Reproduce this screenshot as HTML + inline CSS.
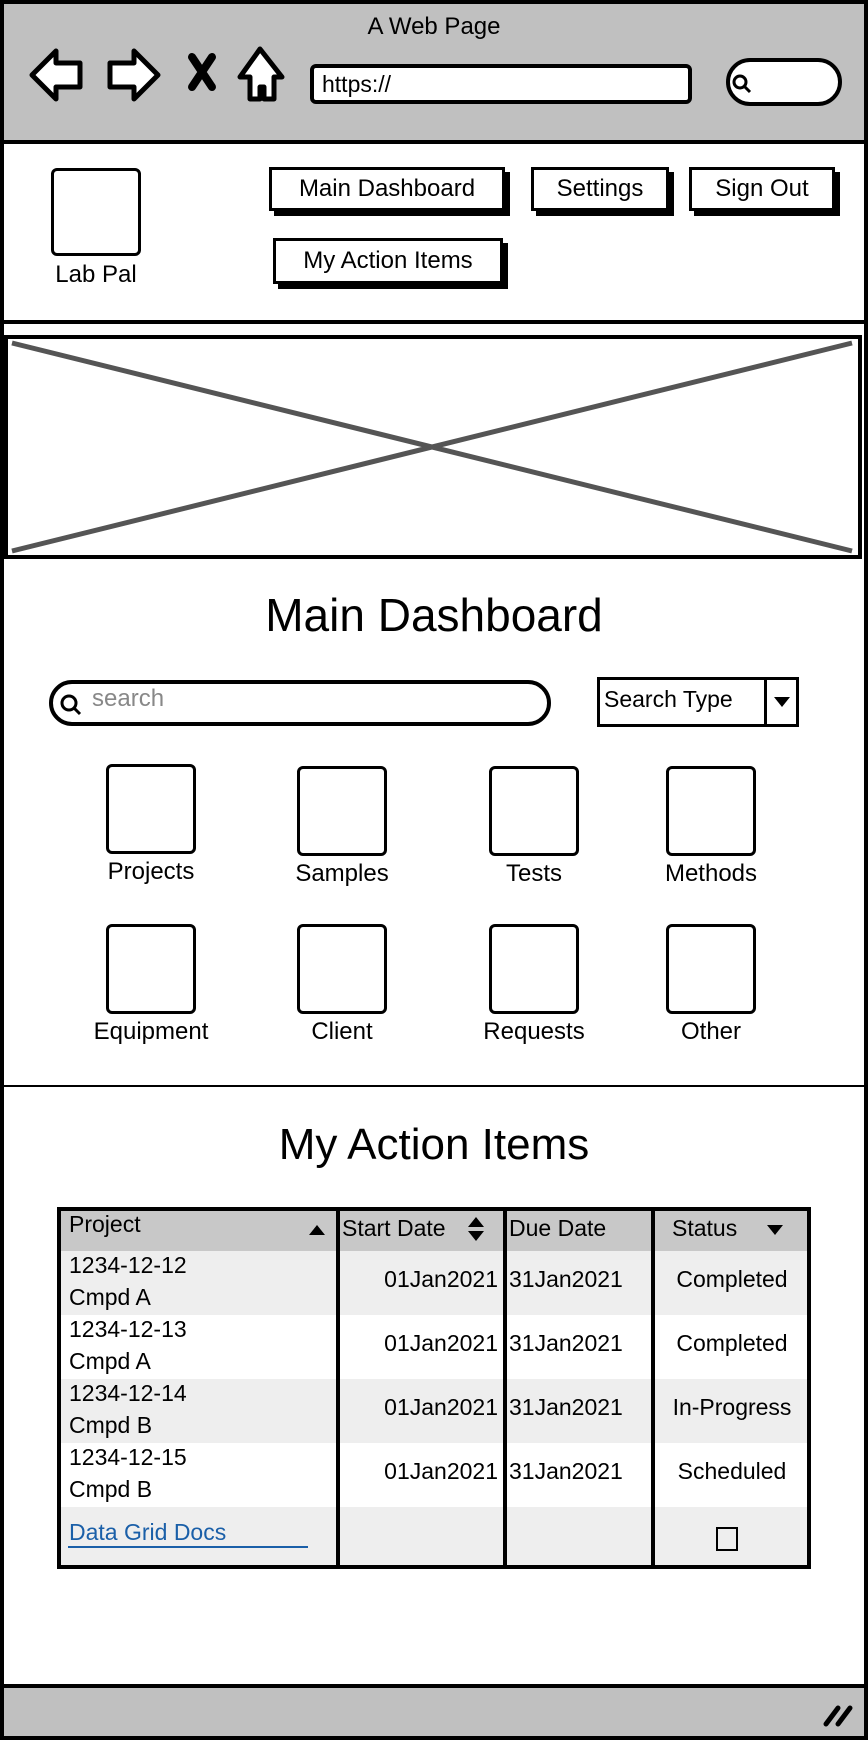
<!DOCTYPE html>
<html><head><meta charset="utf-8"><style>
*{margin:0;padding:0;box-sizing:border-box}
body{width:868px;height:1740px;background:#fff;font-family:"Liberation Sans",sans-serif;color:#000;position:relative;overflow:hidden}
.a{position:absolute}
.box{position:absolute;border:3px solid #000;border-radius:6px;background:#fff}
.btn{position:absolute;border:3px solid #000;background:#fff;box-shadow:5px 5px 0 #000;font-size:24px;text-align:center}
.lbl{position:absolute;font-size:24px;text-align:center;width:160px}
.t{position:absolute;font-size:24px}
</style></head><body>
<div class="a" style="left:0;top:0;width:868px;height:1740px;border:4px solid #000"></div>
<div class="a" style="left:4px;top:4px;width:860px;height:140px;background:#c0c0c0;border-bottom:4px solid #000"></div>
<div class="t" style="left:0;width:868px;top:13px;text-align:center;font-size:24px">A Web Page</div>
<svg class="a" style="left:28px;top:45px" width="260" height="62" viewBox="0 0 260 62">
<path d="M4 30 L28 6 L28 18 L52 18 L52 42 L28 42 L28 54 Z" fill="#fff" stroke="#000" stroke-width="5" stroke-linejoin="round"/>
<path d="M130 30 L106 6 L106 18 L82 18 L82 42 L106 42 L106 54 Z" fill="#fff" stroke="#000" stroke-width="5" stroke-linejoin="round"/>
<path d="M164 12 L184 42 M184 12 L164 42" stroke="#000" stroke-width="8" stroke-linecap="round"/>
<path d="M232 4 L212 32 L222 32 L222 54 L232 54 L232 42 L236 42 L236 54 L246 54 L246 32 L254 32 Z" fill="#fff" stroke="#000" stroke-width="5" stroke-linejoin="round"/>
</svg>
<div class="a" style="left:310px;top:64px;width:382px;height:40px;border:4px solid #000;border-radius:6px;background:#fff;font-size:23px;padding:3px 8px">https://</div>
<div class="a" style="left:726px;top:58px;width:116px;height:48px;border:4px solid #000;border-radius:24px;background:#fff"></div>
<svg class="a" style="left:730px;top:72px" width="24" height="24"><circle cx="10" cy="10" r="6" fill="none" stroke="#000" stroke-width="3"/><path d="M14 14 L20 20" stroke="#000" stroke-width="3"/></svg>
<div class="box" style="left:51px;top:168px;width:90px;height:88px"></div>
<div class="t" style="left:36px;width:120px;top:261px;text-align:center">Lab Pal</div>
<div class="btn" style="left:269px;top:167px;width:236px;height:44px;line-height:38px">Main Dashboard</div>
<div class="btn" style="left:531px;top:167px;width:138px;height:44px;line-height:38px">Settings</div>
<div class="btn" style="left:689px;top:167px;width:146px;height:44px;line-height:38px">Sign Out</div>
<div class="btn" style="left:273px;top:238px;width:230px;height:46px;line-height:40px">My Action Items</div>
<div class="a" style="left:4px;top:320px;width:860px;height:4px;background:#000"></div>
<div class="a" style="left:4px;top:335px;width:858px;height:224px;border:4px solid #000"></div>
<svg class="a" style="left:4px;top:335px" width="858" height="224"><path d="M8 8 L848 216 M848 8 L8 216" stroke="#555" stroke-width="5"/></svg>
<div class="t" style="left:0;width:868px;top:588px;text-align:center;font-size:46px">Main Dashboard</div>
<div class="a" style="left:49px;top:680px;width:502px;height:46px;border:4px solid #000;border-radius:23px;background:#fff"></div>
<svg class="a" style="left:58px;top:692px" width="26" height="26"><circle cx="11" cy="11" r="7" fill="none" stroke="#000" stroke-width="3"/><path d="M16 16 L22 22" stroke="#000" stroke-width="3"/></svg>
<div class="t" style="left:92px;top:685px;color:#888">search</div>
<div class="a" style="left:597px;top:677px;width:202px;height:50px;border:3px solid #000;background:#fff"></div>
<div class="a" style="left:764px;top:677px;width:3px;height:50px;background:#000"></div>
<div class="t" style="left:604px;top:686px;font-size:23px">Search Type</div>
<svg class="a" style="left:772px;top:695px" width="20" height="14"><path d="M2 2 L18 2 L10 12 Z" fill="#000"/></svg>
<div class="box" style="left:106px;top:764px;width:90px;height:90px"></div>
<div class="box" style="left:297px;top:766px;width:90px;height:90px"></div>
<div class="box" style="left:489px;top:766px;width:90px;height:90px"></div>
<div class="box" style="left:666px;top:766px;width:90px;height:90px"></div>
<div class="lbl" style="left:71px;top:858px">Projects</div>
<div class="lbl" style="left:262px;top:860px">Samples</div>
<div class="lbl" style="left:454px;top:860px">Tests</div>
<div class="lbl" style="left:631px;top:860px">Methods</div>
<div class="box" style="left:106px;top:924px;width:90px;height:90px"></div>
<div class="box" style="left:297px;top:924px;width:90px;height:90px"></div>
<div class="box" style="left:489px;top:924px;width:90px;height:90px"></div>
<div class="box" style="left:666px;top:924px;width:90px;height:90px"></div>
<div class="lbl" style="left:66px;width:170px;top:1018px">Equipment</div>
<div class="lbl" style="left:262px;top:1018px">Client</div>
<div class="lbl" style="left:454px;top:1018px">Requests</div>
<div class="lbl" style="left:631px;top:1018px">Other</div>
<div class="a" style="left:4px;top:1085px;width:860px;height:2px;background:#000"></div>
<div class="t" style="left:0;width:868px;top:1120px;text-align:center;font-size:44px">My Action Items</div>
<div class="a" style="left:57px;top:1207px;width:754px;height:362px;border:4px solid #000;background:#fff;overflow:hidden">
  <div class="a" style="left:0;top:0;width:750px;height:40px;background:#c8c8c8"></div>
  <div class="a" style="left:0;top:40px;width:750px;height:64px;background:#eee"></div>
  <div class="a" style="left:0;top:168px;width:750px;height:64px;background:#eee"></div>
  <div class="a" style="left:0;top:296px;width:750px;height:62px;background:#eee"></div>
</div>
<div class="a" style="left:336px;top:1207px;width:4px;height:362px;background:#000"></div>
<div class="a" style="left:503px;top:1207px;width:4px;height:362px;background:#000"></div>
<div class="a" style="left:651px;top:1207px;width:4px;height:362px;background:#000"></div>
<div class="t" style="left:69px;top:1211px;font-size:23px">Project</div>
<svg class="a" style="left:307px;top:1223px" width="20" height="14"><path d="M2 12 L18 12 L10 2 Z" fill="#000"/></svg>
<div class="t" style="left:342px;top:1215px;font-size:23px">Start Date</div>
<svg class="a" style="left:466px;top:1215px" width="22" height="30"><path d="M2 12 L18 12 L10 2 Z M2 16 L18 16 L10 26 Z" fill="#000"/></svg>
<div class="t" style="left:509px;top:1215px;font-size:23px">Due Date</div>
<div class="t" style="left:672px;top:1215px;font-size:23px">Status</div>
<svg class="a" style="left:765px;top:1223px" width="20" height="14"><path d="M2 2 L18 2 L10 12 Z" fill="#000"/></svg>
<div class="t" style="left:69px;top:1249px;font-size:23px;line-height:32px">1234-12-12<br>Cmpd A</div>
<div class="t" style="left:69px;top:1313px;font-size:23px;line-height:32px">1234-12-13<br>Cmpd A</div>
<div class="t" style="left:69px;top:1377px;font-size:23px;line-height:32px">1234-12-14<br>Cmpd B</div>
<div class="t" style="left:69px;top:1441px;font-size:23px;line-height:32px">1234-12-15<br>Cmpd B</div>
<div class="t" style="left:340px;width:158px;text-align:right;top:1266px;font-size:23px">01Jan2021</div>
<div class="t" style="left:340px;width:158px;text-align:right;top:1330px;font-size:23px">01Jan2021</div>
<div class="t" style="left:340px;width:158px;text-align:right;top:1394px;font-size:23px">01Jan2021</div>
<div class="t" style="left:340px;width:158px;text-align:right;top:1458px;font-size:23px">01Jan2021</div>
<div class="t" style="left:509px;top:1266px;font-size:23px">31Jan2021</div>
<div class="t" style="left:509px;top:1330px;font-size:23px">31Jan2021</div>
<div class="t" style="left:509px;top:1394px;font-size:23px">31Jan2021</div>
<div class="t" style="left:509px;top:1458px;font-size:23px">31Jan2021</div>
<div class="t" style="left:655px;width:154px;text-align:center;top:1266px;font-size:23px">Completed</div>
<div class="t" style="left:655px;width:154px;text-align:center;top:1330px;font-size:23px">Completed</div>
<div class="t" style="left:655px;width:154px;text-align:center;top:1394px;font-size:23px">In-Progress</div>
<div class="t" style="left:655px;width:154px;text-align:center;top:1458px;font-size:23px">Scheduled</div>
<div class="t" style="left:69px;top:1519px;font-size:23px;color:#1a5fa8">Data Grid Docs</div>
<div class="a" style="left:68px;top:1546px;width:240px;height:2px;background:#1a5fa8"></div>
<div class="a" style="left:716px;top:1527px;width:22px;height:24px;border:2px solid #000"></div>
<div class="a" style="left:4px;top:1684px;width:860px;height:52px;background:#c0c0c0;border-top:4px solid #000"></div>
<svg class="a" style="left:822px;top:1700px" width="34" height="30"><path d="M4 24 L16 8 M16 24 L28 8" stroke="#000" stroke-width="5" stroke-linecap="round"/></svg>
</body></html>
